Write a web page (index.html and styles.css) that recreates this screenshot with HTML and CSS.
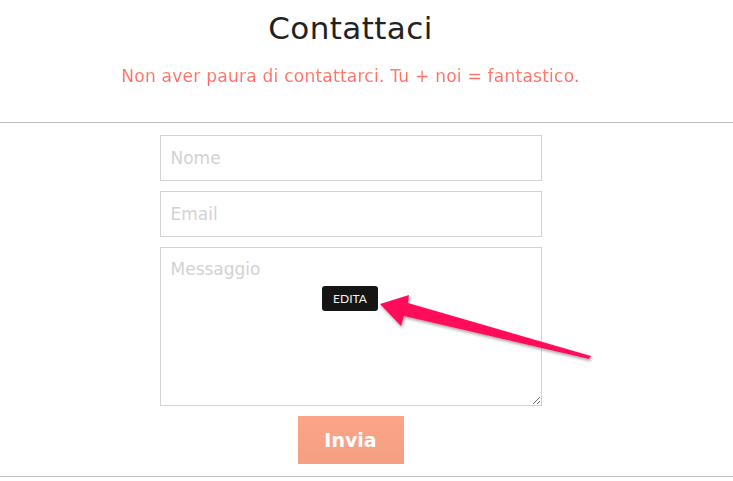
FILE: index.html
```html
<!DOCTYPE html>
<html lang="it">
<head>
<meta charset="utf-8">
<link rel="stylesheet" href="styles.css">
</head>
<body>
<header class="intro">
  <h1 class="title">Contattaci</h1>
  <p class="subtitle">Non aver paura di contattarci. Tu + noi = fantastico.</p>
</header>
<hr class="rule">
<form class="form">
  <input class="field" type="text" placeholder="Nome">
  <input class="field" type="text" placeholder="Email">
  <textarea class="field area" placeholder="Messaggio"></textarea>
  <button class="send" type="button">Invia</button>
</form>
<hr class="rule rule-bottom">
<div class="badge">EDITA</div>
<svg class="arrow" width="733" height="481" viewBox="0 0 733 481">
  <defs>
    <filter id="sh" x="-10%" y="-30%" width="120%" height="160%">
      <feDropShadow dx="1" dy="2" stdDeviation="1.5" flood-color="#000" flood-opacity="0.35"/>
    </filter>
  </defs>
  <polygon filter="url(#sh)" fill="#ff0f5a" points="380,304 409,295 408,303 591,356 589,359 404,316 401,326"/>
</svg>
</body>
</html>
```
FILE: styles.css
```css
html, body {
  margin: 0;
  padding: 0;
  background: #fff;
}
body {
  width: 733px;
  height: 481px;
  overflow: hidden;
  position: relative;
  font-family: "DejaVu Sans", sans-serif;
}
.intro {
  width: 701px;
  text-align: center;
  padding-top: 9px;
}
.title {
  margin: 0;
  font-size: 31px;
  font-weight: 400;
  line-height: 38px;
  color: #222;
  letter-spacing: 0.4px;
}
.subtitle {
  margin: 18px 0 0;
  font-size: 17px;
  line-height: 22px;
  letter-spacing: 0.25px;
  background: linear-gradient(180deg, #ff8a5c 0%, #ff5e72 100%);
  -webkit-background-clip: text;
  background-clip: text;
  color: transparent;
}
.rule {
  margin: 0;
  border: 0;
  height: 1px;
  background: #bdbdbd;
  margin-top: 35px;
}
.form {
  width: 701px;
  display: flex;
  flex-direction: column;
  align-items: center;
  gap: 10px;
  padding-top: 12px;
}
.field {
  box-sizing: border-box;
  width: 382px;
  height: 46px;
  margin: 0;
  border: 1px solid #d3d3d3;
  border-radius: 0;
  padding: 0 10px;
  font-family: inherit;
  font-size: 17px;
  color: #333;
  background: #fff;
  outline: none;
}
.field::placeholder {
  color: #d2d2d2;
}
.area {
  height: 159px;
  padding-top: 11px;
  resize: vertical;
}
.send {
  width: 106px;
  height: 48px;
  border: 0;
  background: linear-gradient(180deg, #fca488 0%, #f59f82 100%);
  color: #fff;
  font-family: inherit;
  font-weight: 700;
  font-size: 19px;
}
.rule-bottom {
  margin-top: 12px;
}
.badge {
  position: absolute;
  left: 322px;
  top: 286px;
  width: 56px;
  height: 25px;
  box-sizing: border-box;
  background: #151515;
  color: #f2f2f2;
  border-radius: 3px;
  font-family: "Lato", sans-serif;
  font-size: 12px;
  line-height: 25px;
  text-align: center;
}
.arrow {
  position: absolute;
  left: 0;
  top: 0;
  pointer-events: none;
}
```
